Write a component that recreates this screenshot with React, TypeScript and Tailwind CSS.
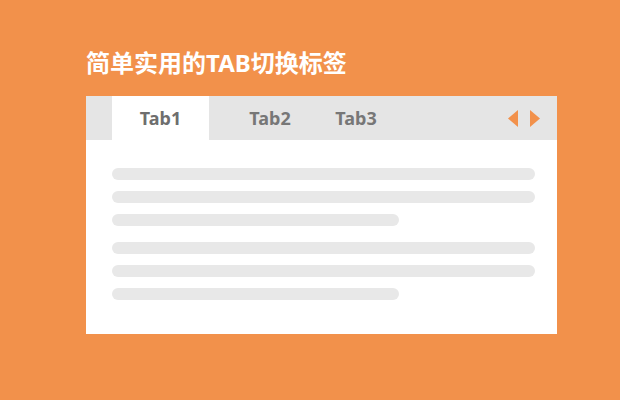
export default function App() {
  const groups = [
    ['w-full', 'w-full', 'w-[287px]'],
    ['w-full', 'w-full', 'w-[287px]'],
  ];

  return (
    <div
      className="w-[620px] h-[400px] bg-[#f2914b] pt-[46px] pl-[86px]"
      style={{ fontFamily: '"Noto Sans", "Noto Sans CJK SC", sans-serif' }}
    >
      <h1 className="text-[24px] leading-[34px] font-bold text-white">
        简单实用的TAB切换标签
      </h1>

      {/* Tab card */}
      <div className="mt-[16px] w-[471px] h-[238px] bg-white">
        <div className="h-[44px] bg-[#e5e5e5] flex items-stretch pl-[26px]">
          <div className="w-[97px] bg-white flex items-center justify-center text-[18px] font-bold text-[#6e6e6e]">
            Tab1
          </div>
          <div className="ml-[18px] w-[86px] flex items-center justify-center text-[18px] font-bold text-[#777]">
            Tab2
          </div>
          <div className="w-[86px] flex items-center justify-center text-[18px] font-bold text-[#777]">
            Tab3
          </div>
          <div className="ml-auto mr-[17px] flex items-center gap-[12px]">
            <svg width="10" height="17" viewBox="0 0 10 17">
              <polygon points="10,0 10,17 0,8.5" fill="#f2914b" />
            </svg>
            <svg width="10" height="17" viewBox="0 0 10 17">
              <polygon points="0,0 0,17 10,8.5" fill="#f2914b" />
            </svg>
          </div>
        </div>

        {/* Placeholder lines */}
        <div className="pl-[26px] pr-[22px] pt-[28px] flex flex-col gap-[16px]">
          {groups.map((g, i) => (
            <div key={i} className="flex flex-col gap-[11px]">
              {g.map((w, j) => (
                <div key={j} className={`${w} h-[12px] rounded-full bg-[#e8e8e8]`} />
              ))}
            </div>
          ))}
        </div>
      </div>
    </div>
  );
}
